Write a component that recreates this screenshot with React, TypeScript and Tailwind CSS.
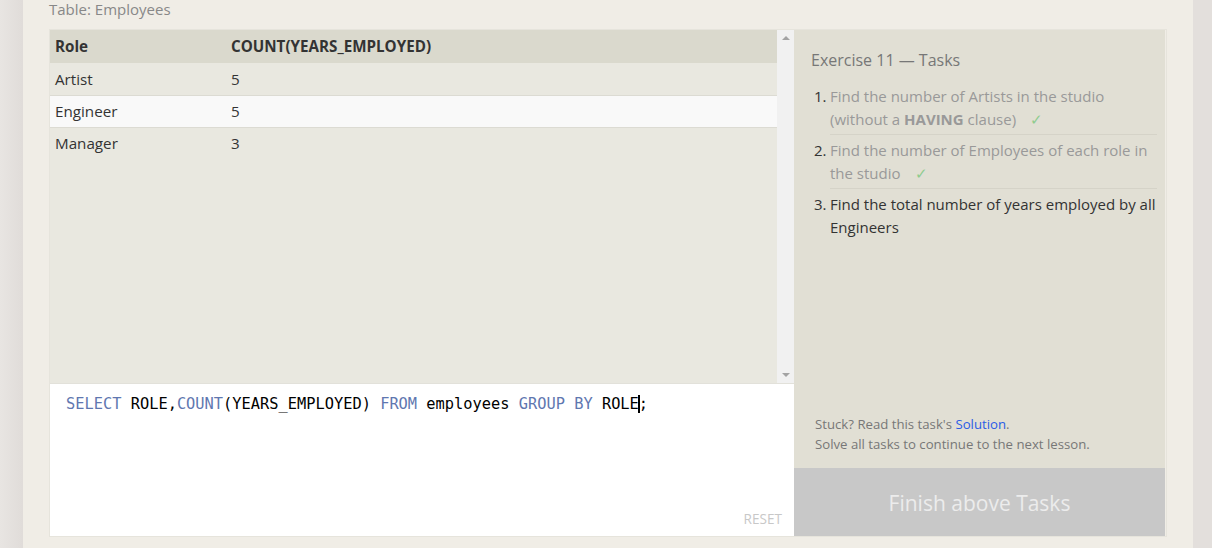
import React from 'react';

const ROWS = [
  { role: 'Artist', count: 5 },
  { role: 'Engineer', count: 5 },
  { role: 'Manager', count: 3 },
];

const TASKS = [
  {
    done: true,
    text: (
      <>
        Find the number of Artists in the studio (without a <b className="font-bold">HAVING</b> clause)
      </>
    ),
  },
  { done: true, text: <>Find the number of Employees of each role in the studio</> },
  { done: false, text: <>Find the total number of years employed by all Engineers</> },
];

const sans = { fontFamily: '"Open Sans", "Noto Sans", sans-serif' };

const ResultTable: React.FC = () => (
  <div className="flex h-[353px] bg-[#e9e8e0]">
    <div className="flex-1 overflow-hidden">
      <table className="w-full border-collapse text-[15.2px] text-[#333]" style={sans}>
        <thead>
          <tr className="h-[33px] bg-[#dad9cd]">
            <th className="w-[181px] pl-[5px] text-left font-bold">Role</th>
            <th className="text-left font-bold">COUNT(YEARS_EMPLOYED)</th>
          </tr>
        </thead>
        <tbody>
          {ROWS.map((r, i) => (
            <tr
              key={r.role}
              className={`h-[32px] ${i < ROWS.length - 1 ? 'border-b border-[#dcdbd3]' : ''} ${
                i === 1 ? 'bg-[#f9f9f9]' : 'bg-[#e9e8e0]'
              }`}
            >
              <td className="pl-[5px] pt-[1px]">{r.role}</td>
              <td className="pt-[1px]">{r.count}</td>
            </tr>
          ))}
        </tbody>
      </table>
    </div>
    {/* scrollbar */}
    <div className="flex w-[17px] flex-col items-center justify-between bg-[#f1f1f1] py-[6px]">
      <div className="h-0 w-0 border-x-[4px] border-b-[4px] border-x-transparent border-b-[#a3a3a3]" />
      <div className="h-0 w-0 border-x-[4px] border-t-[4px] border-x-transparent border-t-[#a3a3a3]" />
    </div>
  </div>
);

const Editor: React.FC = () => (
  <div className="relative h-[153px] border-t border-[#e2e1da] bg-white">
    <div
      className="pl-[16px] pt-[10px] text-[15.35px] leading-[20px] whitespace-pre text-black"
      style={{ fontFamily: '"DejaVu Sans Mono", "Liberation Mono", monospace' }}
    >
      <span className="text-[#5f77b0]">SELECT</span> ROLE,<span className="text-[#5f77b0]">COUNT</span>(YEARS_EMPLOYED){' '}
      <span className="text-[#5f77b0]">FROM</span> employees <span className="text-[#5f77b0]">GROUP</span>{' '}
      <span className="text-[#5f77b0]">BY</span> ROLE
      <span className="relative inline-block">
        <span className="absolute left-[-1px] top-[1px] h-[18px] w-[2px] bg-black" />;
      </span>
    </div>
    <div className="absolute bottom-[7px] right-[12px] text-[13.6px] text-[#c8c8c8]" style={sans}>
      RESET
    </div>
  </div>
);

const TaskPanel: React.FC = () => (
  <div className="flex w-[371px] flex-col bg-[#e1dfd4]" style={sans}>
    <div className="flex-1 pl-[17px] pr-[8px] pt-[19px]">
      <h2 className="text-[16px] leading-[22px] text-[#777]">Exercise 11 — Tasks</h2>
      <ol className="mt-[10px]">
        {TASKS.map((t, i) => (
          <li key={i} className="flex text-[15px] leading-[23px]">
            <span className="w-[19px] shrink-0 pl-[3px] pt-[4px] text-[#333]">{i + 1}.</span>
            <div
              className={`flex-1 pt-[4px] pb-[3px] ${i < TASKS.length - 1 ? 'border-b border-[#d5d3c8]' : ''} ${
                t.done ? 'text-[#999]' : 'text-[#333]'
              }`}
            >
              {t.text}
              {t.done && <span className="ml-[14px] text-[#8fcc8f]">✓</span>}
            </div>
          </li>
        ))}
      </ol>
    </div>
    <div className="pb-[14px] pl-[21px] text-[13.2px] leading-[20px] text-[#777]">
      <p>
        Stuck? Read this task's <span className="text-[#2a5ce6]">Solution</span>.
      </p>
      <p>Solve all tasks to continue to the next lesson.</p>
    </div>
    <button type="button" className="h-[68px] w-full bg-[#c8c8c8] pt-[4px] text-[21px] text-[#ececec]">
      Finish above Tasks
    </button>
  </div>
);

export default function App() {
  return (
    <div className="flex h-[548px] w-[1212px] overflow-hidden bg-[#e3dfdc]">
      <div className="w-[23px] bg-gradient-to-r from-[#e8e5e2] to-[#e0dcd9]" />
      <div className="w-[1170px] bg-[#f0ede6] px-[26px]">
        <div className="h-[29px] text-[15px] leading-[19px] text-[#888]" style={sans}>
          Table: Employees
        </div>
        <div className="flex border border-[#e6e4dc]">
          <div className="flex w-[744px] flex-col">
            <ResultTable />
            <Editor />
          </div>
          <TaskPanel />
        </div>
      </div>
      <div className="flex-1 bg-[#e3dfdc]" />
    </div>
  );
}
